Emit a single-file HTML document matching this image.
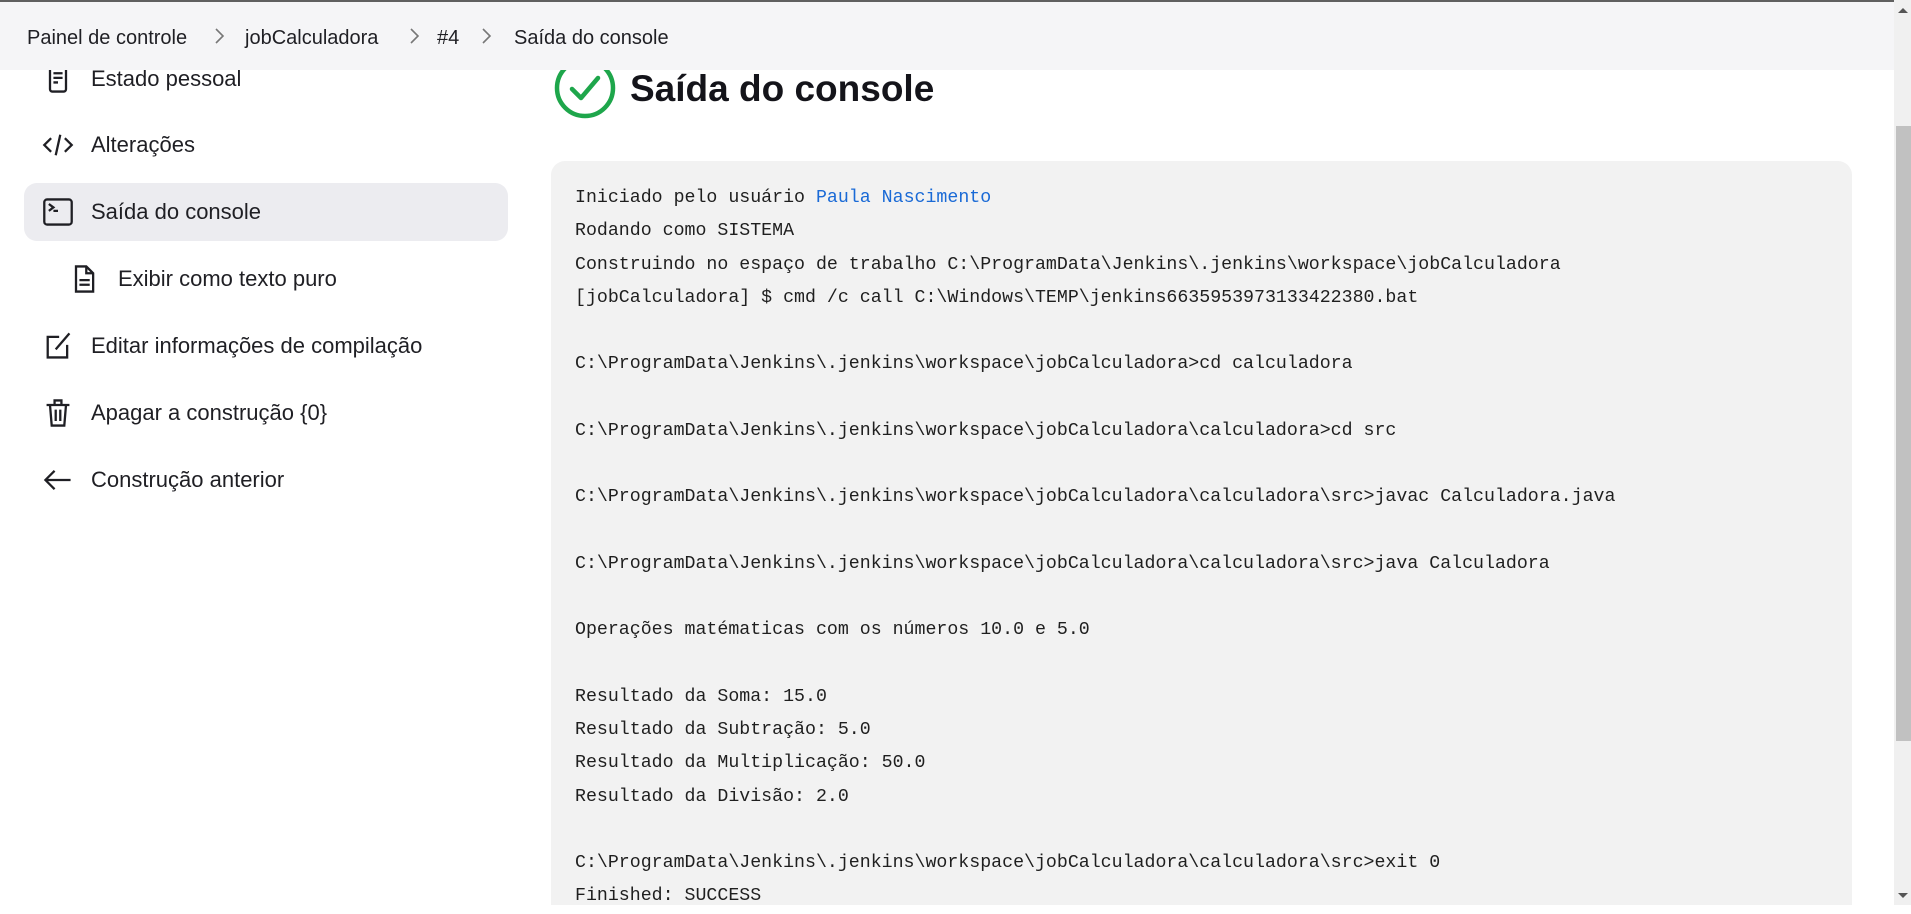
<!DOCTYPE html>
<html><head><meta charset="utf-8"><style>
*{margin:0;padding:0;box-sizing:border-box}
html,body{width:1911px;height:905px;overflow:hidden;background:#fff;font-family:"Liberation Sans",sans-serif;color:#1f1f24}
.top{position:absolute;left:0;top:0;width:1894px;height:70px;background:#f5f5f7;border-top:2px solid #606060;z-index:3}
.bc{position:absolute;top:25px;font-size:20px;color:#1f1f24;white-space:nowrap}
.sep{position:absolute;top:22px}
.item{position:absolute;left:24px;width:484px;height:58px;font-size:22px;display:flex;align-items:center}
.item svg{position:absolute;left:18px;width:32px;height:32px}
.item span{position:absolute;left:67px}
.active{background:#ececf0;border-radius:13px}
.title{position:absolute;left:630px;top:68px;font-size:37px;font-weight:bold;color:#14141a}
.box{position:absolute;left:551px;top:161px;width:1301px;height:744px;background:#f2f2f2;border-radius:14px 14px 0 0}
pre{position:absolute;left:575px;top:182px;font-family:"Liberation Mono",monospace;font-size:18.25px;line-height:33.25px;color:#1f1f1f}
pre a{color:#1a6ad6;text-decoration:none}
.sb{position:absolute;left:1894px;top:0;width:17px;height:905px;background:#f0f0f0}
.th{position:absolute;left:1896px;top:126px;width:15px;height:615px;background:#c1c1c1}
</style></head><body>

<div class="item" style="top:50px"><svg viewBox="0 0 28 28" fill="none" stroke="#1f1f24" stroke-width="2"><rect x="7" y="3" width="14" height="22" rx="2"/><path d="M10 9h8M10 13h8M10 17h4"/></svg><span>Estado pessoal</span></div>
<div class="item" style="top:116px"><svg viewBox="0 0 28 28" fill="none" stroke="#1f1f24" stroke-width="2"><path d="M8 8l-6 6 6 6M20 8l6 6-6 6M16 5l-4 18"/></svg><span>Alterações</span></div>
<div class="item active" style="top:183px"><svg viewBox="0 0 28 28" fill="none" stroke="#1f1f24" stroke-width="2"><rect x="2" y="3" width="24" height="22" rx="2.5"/><path d="M6 7l4 3-4 3M10 13h4"/></svg><span>Saída do console</span></div>
<div class="item" style="top:250px"><svg style="left:44px" viewBox="0 0 28 28" fill="none" stroke="#1f1f24" stroke-width="2"><path d="M7 3h9l6 6v16H7z"/><path d="M16 3v6h6M10 15h9M10 19h9"/></svg><span style="left:94px">Exibir como texto puro</span></div>
<div class="item" style="top:317px"><svg viewBox="0 0 28 28" fill="none" stroke="#1f1f24" stroke-width="2"><path d="M15 6H5v18h17V13"/><path d="M12 17L24 3"/></svg><span>Editar informações de compilação</span></div>
<div class="item" style="top:384px"><svg viewBox="0 0 28 28" fill="none" stroke="#1f1f24" stroke-width="2"><path d="M4 7h20M11 7V3h6v4M7 7l1.5 18h11L21 7M12 11v10M16 11v10"/></svg><span>Apagar a construção {0}</span></div>
<div class="item" style="top:451px"><svg viewBox="0 0 28 28" fill="none" stroke="#1f1f24" stroke-width="2"><path d="M25 14H4M11 6l-8 8 8 8"/></svg><span>Construção anterior</span></div>

<svg style="position:absolute;left:553px;top:56px" width="64" height="64" viewBox="0 0 64 64"><circle cx="32" cy="32" r="28" fill="none" stroke="#1ea64b" stroke-width="4.5"/><path d="M19 33l9 9 17-20" fill="none" stroke="#1ea64b" stroke-width="4.5" stroke-linecap="round" stroke-linejoin="round"/></svg>
<div class="title">Saída do console</div>

<div class="box"></div>
<pre>Iniciado pelo usuário <a>Paula Nascimento</a>
Rodando como SISTEMA
Construindo no espaço de trabalho C:\ProgramData\Jenkins\.jenkins\workspace\jobCalculadora
[jobCalculadora] $ cmd /c call C:\Windows\TEMP\jenkins6635953973133422380.bat

C:\ProgramData\Jenkins\.jenkins\workspace\jobCalculadora>cd calculadora

C:\ProgramData\Jenkins\.jenkins\workspace\jobCalculadora\calculadora>cd src

C:\ProgramData\Jenkins\.jenkins\workspace\jobCalculadora\calculadora\src>javac Calculadora.java

C:\ProgramData\Jenkins\.jenkins\workspace\jobCalculadora\calculadora\src>java Calculadora

Operações matématicas com os números 10.0 e 5.0

Resultado da Soma: 15.0
Resultado da Subtração: 5.0
Resultado da Multiplicação: 50.0
Resultado da Divisão: 2.0

C:\ProgramData\Jenkins\.jenkins\workspace\jobCalculadora\calculadora\src>exit 0
Finished: SUCCESS</pre>
<div class="top"><span class="bc" style="left:27px">Painel de controle</span>
<svg class="sep" style="left:211px" width="16" height="24" viewBox="0 0 16 24"><path d="M5 5l7 7-7 7" fill="none" stroke="#777" stroke-width="1.6"/></svg>
<span class="bc" style="left:245px">jobCalculadora</span>
<svg class="sep" style="left:406px" width="16" height="24" viewBox="0 0 16 24"><path d="M5 5l7 7-7 7" fill="none" stroke="#777" stroke-width="1.6"/></svg>
<span class="bc" style="left:437px">#4</span>
<svg class="sep" style="left:478px" width="16" height="24" viewBox="0 0 16 24"><path d="M5 5l7 7-7 7" fill="none" stroke="#777" stroke-width="1.6"/></svg>
<span class="bc" style="left:514px">Saída do console</span></div>
<div class="sb"></div><div class="th"></div>
<svg style="position:absolute;left:1896px;top:6px" width="14" height="8"><path d="M2 7l5-5 5 5z" fill="#555"/></svg>
<svg style="position:absolute;left:1896px;top:892px" width="14" height="8"><path d="M2 1l5 5 5-5z" fill="#555"/></svg>
</body></html>
